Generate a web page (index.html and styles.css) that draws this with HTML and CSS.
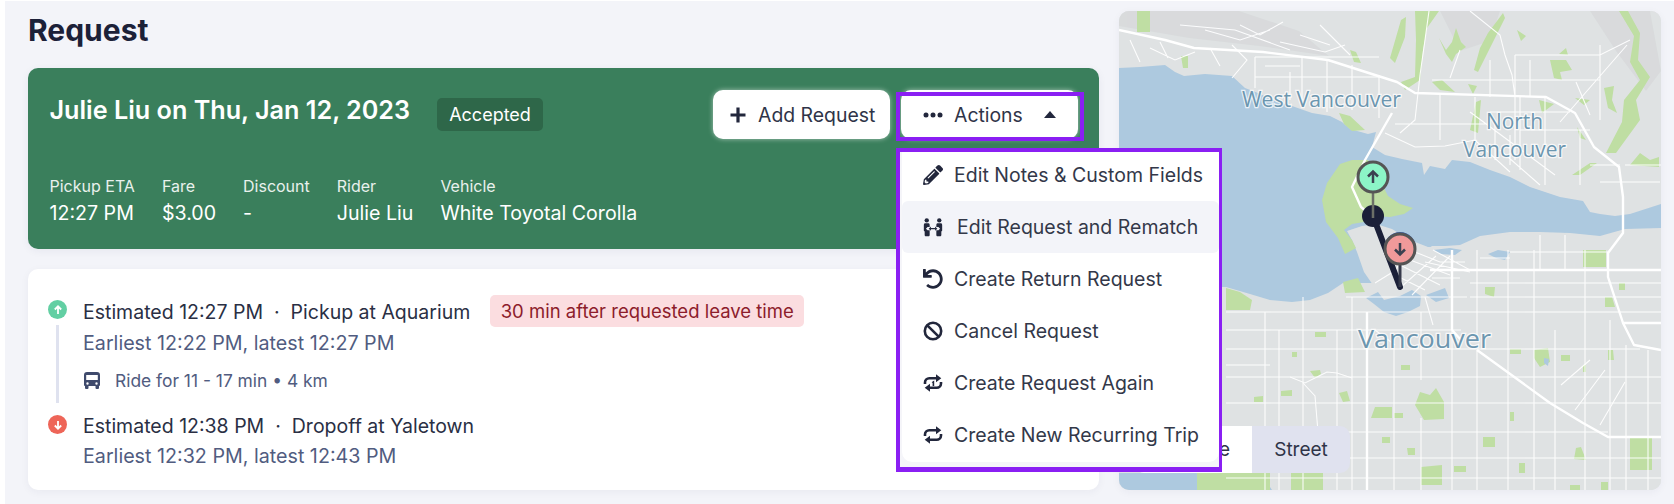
FILE: index.html
```html
<!DOCTYPE html>
<html lang="en">
<head>
<meta charset="utf-8">
<title>Request</title>
<link rel="stylesheet" href="styles.css">
</head>
<body>
<div class="app">
  <main class="main">
    <h1 class="page-title">Request</h1>
    <section class="summary">
      <div class="summary-top">
        <h2 class="summary-title">Julie Liu on Thu, Jan 12, 2023</h2>
        <span class="status">Accepted</span>
        <div class="summary-actions">
          <button class="btn btn-add" type="button">
            <svg class="i-plus" viewBox="0 0 18 18"><path d="M9 1.500v15M1.500 9h15"/></svg>
            <span>Add Request</span>
          </button>
          <div class="actions">
            <button class="btn btn-actions" type="button">
              <svg class="i-dots" viewBox="0 0 20 6"><circle cx="3" cy="3" r="2.500"/><circle cx="10" cy="3" r="2.500"/><circle cx="17" cy="3" r="2.500"/></svg>
              <span>Actions</span>
              <svg class="i-caret" viewBox="0 0 12 7"><path d="M6 0l6 7H0z"/></svg>
            </button>
            <div class="menu">
              <ul class="menu-list">
                <li class="menu-item menu-first">
                  <svg class="mi" viewBox="0 0 512 512"><path class="fill" d="M497.9 142.1l-46.1 46.1c-4.7 4.7-12.3 4.7-17 0l-111-111c-4.7-4.7-4.7-12.3 0-17l46.1-46.1c18.7-18.7 49.1-18.7 67.9 0l60.1 60.1c18.8 18.7 18.8 49.1 0 67.9zM284.2 99.8L21.6 362.4.4 483.9c-2.9 16.4 11.4 30.6 27.8 27.8l121.5-21.3 262.6-262.6c4.7-4.7 4.7-12.3 0-17l-111-111c-4.8-4.7-12.4-4.7-17.1 0zM124.1 339.9c-5.5-5.5-5.5-14.3 0-19.8l154-154c5.5-5.5 14.3-5.5 19.8 0s5.5 14.3 0 19.8l-154 154c-5.5 5.5-14.3 5.5-19.8 0zM88 424h48v36.3l-64.5 11.3-31.1-31.1L51.7 376H88v48z"/></svg>
                  <span>Edit Notes &amp; Custom Fields</span>
                </li>
                <li class="menu-item menu-hover">
                  <svg class="mi" viewBox="0 0 24 22"><g class="fill"><circle cx="4.500" cy="3" r="2.600"/><circle cx="19.500" cy="3" r="2.600"/><path d="M1 8.500C1 7 2 6.500 3 6.500h3c1 0 2 .5 2 2V11H5.500L3.500 13l2 2H8v5.500c0 .8-.6 1.500-1.500 1.500h-3C2.600 22 2 21.300 2 20.500V16.500L1 15.500zM23 8.500C23 7 22 6.500 21 6.500h-3c-1 0-2 .5-2 2V11h2.500l2 2-2 2H16v5.500c0 .8.600 1.500 1.500 1.500h3c.9 0 1.500-.7 1.500-1.500v-4l1-1z"/><path d="M6.800 13l2.700-2.500v1.700h5v-1.700l2.700 2.500-2.700 2.500v-1.700h-5v1.700z"/></g></svg>
                  <span>Edit Request and Rematch</span>
                </li>
                <li class="menu-item">
                  <svg class="mi" viewBox="0 0 512 512"><path class="fill" d="M212.333 224.333H12c-6.627 0-12-5.373-12-12V12C0 5.373 5.373 0 12 0h48c6.627 0 12 5.373 12 12v78.112C117.773 39.279 184.26 7.47 258.175 8.007c136.906.994 246.448 111.623 246.157 248.532C504.041 393.258 393.12 504 256.333 504c-64.089 0-122.496-24.313-166.51-64.215-5.099-4.622-5.334-12.554-.467-17.42l33.967-33.967c4.474-4.474 11.662-4.717 16.401-.525C170.76 415.336 211.58 432 256.333 432c97.268 0 176-78.716 176-176 0-97.267-78.716-176-176-176-58.496 0-110.28 28.476-142.274 72.333h98.274c6.627 0 12 5.373 12 12v48c0 6.627-5.373 12-12 12z"/></svg>
                  <span>Create Return Request</span>
                </li>
                <li class="menu-item">
                  <svg class="mi" viewBox="0 0 20 20"><g class="line"><circle cx="10" cy="10" r="8.200"/><path d="M4.300 4.300l11.400 11.400"/></g></svg>
                  <span>Cancel Request</span>
                </li>
                <li class="menu-item">
                  <svg class="mi" viewBox="0 0 20 20"><use href="#repeat"/><path class="fill" d="M9.500 8.500l1.700-1v5.500H9.600V9.700l-.9.400z"/></svg>
                  <span>Create Request Again</span>
                </li>
                <li class="menu-item">
                  <svg class="mi" viewBox="0 0 20 20"><use href="#repeat"/></svg>
                  <span>Create New Recurring Trip</span>
                </li>
              </ul>
            </div>
          </div>
        </div>
      </div>
      <dl class="meta">
        <div class="meta-item"><dt>Pickup ETA</dt><dd>12:27 PM</dd></div>
        <div class="meta-item"><dt>Fare</dt><dd>$3.00</dd></div>
        <div class="meta-item"><dt>Discount</dt><dd>-</dd></div>
        <div class="meta-item"><dt>Rider</dt><dd>Julie Liu</dd></div>
        <div class="meta-item"><dt>Vehicle</dt><dd>White Toyotal Corolla</dd></div>
      </dl>
    </section>
    <section class="route">
      <div class="stop stop-pickup">
        <div class="stop-rail">
          <span class="dot dot-up"><svg viewBox="0 0 12 12"><path d="M6 10V2.500M2.800 5.500L6 2.300l3.200 3.200"/></svg></span>
          <span class="rail"></span>
        </div>
        <div class="stop-body">
          <div class="stop-line">
            <span>Estimated 12:27 PM&nbsp; ·&nbsp; Pickup at Aquarium</span>
            <span class="late">30 min after requested leave time</span>
          </div>
          <div class="stop-sub">Earliest 12:22 PM, latest 12:27 PM</div>
          <div class="ride">
            <svg class="i-bus" viewBox="0 0 18 18"><path d="M4 1h10a3 3 0 0 1 3 3v10a1 1 0 0 1-1 1v2a1 1 0 0 1-1 1h-1.500a1 1 0 0 1-1-1v-2h-7v2a1 1 0 0 1-1 1H3a1 1 0 0 1-1-1v-2a1 1 0 0 1-1-1V4a3 3 0 0 1 3-3zM3.200 4v5h11.600V4zm1.300 7.300a1.200 1.200 0 1 0 0 2.400 1.200 1.200 0 0 0 0-2.400zm9 0a1.200 1.200 0 1 0 0 2.400 1.200 1.200 0 0 0 0-2.400z" fill-rule="evenodd"/></svg>
            <span>Ride for 11 - 17 min • 4 km</span>
          </div>
        </div>
      </div>
      <div class="stop">
        <div class="stop-rail">
          <span class="dot dot-down"><svg viewBox="0 0 12 12"><path d="M6 2v7.500M2.800 6.500L6 9.700l3.200-3.200"/></svg></span>
        </div>
        <div class="stop-body">
          <div class="stop-line"><span>Estimated 12:38 PM&nbsp; ·&nbsp; Dropoff at Yaletown</span></div>
          <div class="stop-sub">Earliest 12:32 PM, latest 12:43 PM</div>
        </div>
      </div>
    </section>
  </main>
  <aside class="map">
    <svg class="map-svg" viewBox="1119 11 542 479" preserveAspectRatio="none">
      <rect class="land" x="1119" y="11" width="542" height="479"/>
      <path class="hill" d="M1119 11h120l60 20 30 25-70-10-70-8-70-12zM1590 11h60l11 60-15 20-30-40zM1440 11h60l-10 30-30 10z"/>
      <path class="water" d="M1119 68L1140 67 1165 65 1175 72 1184 76 1205 74 1232 76 1245 88 1258 93 1275 101 1292 106 1312 113 1330 116 1342 122 1350 129 1368 134 1376 132 1372 147 1385 155 1402 159 1422 163 1424 175 1430 166 1445 169 1452 160 1470 162 1490 170 1510 177 1530 187 1560 197 1583 201 1590 212 1600 214 1615 216 1630 214 1661 204 1661 228 1625 229 1600 236 1570 233 1540 232 1510 232 1480 236 1460 245 1445 246 1432 246 1420 254 1400 260 1375 283 1343 283 1328 293 1310 300 1292 302 1270 300 1250 294 1226 287 1119 287Z"/>
      <path class="land" d="M1347 231L1362 226 1376 224 1392 229 1410 240 1428 247 1460 248 1480 238 1510 234 1510 300 1440 300 1400 296 1375 288 1364 272 1357 252 1352 240Z"/>
      <path class="water" d="M1366 298L1378 292 1384 300 1400 296 1412 290 1421 296 1420 306 1408 312 1396 316 1384 312 1374 304ZM1426 295L1445 288 1449 298 1436 302ZM1488 254L1498 250 1510 252 1505 260 1496 258ZM1433 250L1450 248 1462 250 1455 255 1440 254ZM1119 473L1197 473 1200 490 1119 490ZM1215 478L1270 487 1272 490 1215 490Z"/>
      <g class="park">
        <path d="M1322 200L1327 183 1340 164 1352 160 1368 160 1376 172 1388 196 1400 204 1413 208 1404 214 1390 217 1375 216 1364 222 1352 224 1344 230 1352 240 1356 248 1345 254 1338 238 1326 222Z"/>
        <path d="M1339 113L1350 116 1365 130 1352 131 1344 124ZM1343 282L1358 278 1365 292 1345 293ZM1226 288L1240 292 1252 300 1250 310 1226 310Z"/>
        <path d="M1137 11h13v21h-13zM1181 56h7v12h-5zM1401 20L1406 17 1405 37 1395 63 1390 58ZM1415 11H1439L1427 28 1423 50 1420 80 1405 90 1401 82 1415 77 1416 40ZM1350 50L1356 52 1361 63 1354 62Z"/>
        <path d="M1439 38L1446 50 1452 42 1456 28 1461 42 1466 47 1456 54 1452 62 1446 54ZM1474 70L1480 48 1488 33 1503 13 1505 18 1494 40 1486 56 1478 72ZM1517 30L1526 36 1521 41ZM1550 60H1566L1572 70 1560 72 1562 80 1554 78ZM1559 54L1566 48 1568 55Z"/>
        <path d="M1619 11H1628L1640 33 1638 60 1650 77 1636 100 1640 120 1616 153 1606 153 1622 122 1624 100 1640 80 1630 62 1634 36ZM1604 88L1614 86 1612 100 1617 113 1608 108ZM1432 82L1442 80 1455 92 1440 90ZM1468 84L1477 86 1473 94ZM1470 130L1476 102 1481 100 1478 133ZM1539 100L1554 104 1542 113ZM1575 98L1590 100 1584 105ZM1577 127L1586 140 1580 138ZM1572 175L1590 163 1597 163 1580 175ZM1630 165L1640 153 1650 160 1659 157 1659 167Z"/>
        <path d="M1583 250h23v17h-23zM1485 287h10l-1 10-9-3zM1605 297h7l3 10h-10zM1619 283h6v7h-6zM1534 350L1548 348 1550 362 1540 367 1534 358zM1561 355h9v6h-9zM1510 349h11v5h-11zM1608 350h5l1 10h-6zM1583 365h3v7h-3zM1401 365h9v5h-9zM1292 352h5v5h-5zM1315 332h11v5h-11zM1310 371l10-1 1 4-6 4zM1339 393l8-2 3 10-7 1zM1281 391l11-1v6h-11zM1254 397l9-1v6h-9z"/>
        <path d="M1420 392L1430 395 1436 388 1444 402 1444 419 1424 420 1415 405ZM1371 418l4-11h17v11zM1394 413h9v5h-9zM1510 412h4v9h-4zM1382 437h8v6h-8zM1483 437h12v10h-12zM1407 448h8v7h-7zM1576 448l5-1 5 13-12-1zM1630 437h22v33h-22zM1519 463h6v10h-6zM1454 466h12v6h-12zM1421 467l21-2v20h-21zM1291 473h32v17h-32zM1197 473h73v17h-73zM1570 485h10v5h-10zM1601 482h7v8h-7z"/>
      </g>
      <g class="water">
        <path d="M1544 358l5 1-1 7-4-3z"/>
      </g>
      <g class="road">
        <path d="M1255 57H1379M1255 77H1379M1255 57V88M1302 57V100M1327 60V112M1352 65V110M1379 75V118M1290 72V100M1232 45L1247 60 1232 78M1240 25L1260 35 1283 22M1180 25L1235 30 1290 50M1150 48L1175 60 1195 52M1130 40L1140 62M1320 25L1350 55M1280 42L1325 52 1345 45M1300 35L1330 45M1205 30L1240 40 1270 30M1160 42L1168 58M1210 48L1220 66M1265 66H1300"/>
        <path d="M1429 11L1425 40 1420 75 1415 120 1400 133M1470 11L1500 35 1505 55 1512 75 1515 97M1515 55H1600L1630 40M1515 55V160M1432 80H1600M1395 124H1490M1385 133L1415 147 1445 146 1475 140 1510 172M1440 95V140M1475 97V145M1520 97V170M1545 97V185M1580 130V185M1600 45V120M1560 122L1627 45M1490 112H1570M1470 112L1555 175M1520 130H1590M1600 182H1660M1625 165H1661M1500 150L1540 185M1510 135V165M1495 122V160M1590 165H1620"/>
        <path d="M1530 60V97M1490 60V97M1576 82L1590 115M1460 50L1450 78"/>
        <path d="M1433 250L1470 270H1661M1425 262L1470 272M1410 260L1450 275M1400 265L1440 285M1395 275L1425 290M1436 256L1400 288M1450 256L1412 295M1440 262H1465M1438 270H1465M1432 278H1460M1410 250L1440 262M1375 283L1396 270 1405 250M1510 252H1608M1540 235V270M1565 235V270M1480 258H1510"/>
        <path d="M1346 297H1467M1226 312H1450 1470 1661M1226 330H1268 1340 1352 1461M1226 349H1367 1394 1478 1640M1226 377H1260 1290 1300 1337 1352 1367 1394 1421 1520 1661M1226 403H1661M1226 432H1367 1421 1508 1608M1226 458H1661M1226 478H1661M1470 283H1661M1470 297H1661M1226 365H1270"/>
        <path d="M1265 312V490M1279 330V490M1303 297V490M1337 330V490M1352 297V490M1394 349V490M1421 312V380 M1421 418V490M1452 290V490M1477 250V340M1477 350V490M1508 250V490M1534 250V490M1555 330V490M1585 250V490M1610 320V490M1626 345V490M1648 350V490"/>
        <path d="M1425 297L1433 325 M1375 330L1395 345M1290 377L1305 383 1327 372 1337 373 1352 378M1303 383L1315 396 1318 432M1561 385L1590 360M1575 410L1605 370M1600 425L1625 382"/>
      </g>
      <g class="road-main">
        <path d="M1119 30L1165 40 1194 48 1263 52 1328 60 1375 75 1397 82 1415 93 1546 97 1575 113 1594 147 1619 167 1623 197 1623 233 1608 253 1608 277 1623 323 1634 345 1661 350"/>
        <path d="M1392 113L1365 160 1352 187 1361 207 1372 216"/>
        <path d="M1367 312V490M1452 250V330 M1452 330L1461 340M1477 350L1550 403 1583 423 1608 437 1661 437M1623 323H1661M1430 270H1661"/>
      </g>
      <g class="place">
        <text class="place-md" x="1242" y="107" textLength="159" lengthAdjust="spacingAndGlyphs">West Vancouver</text>
        <text class="place-md" x="1486" y="129" textLength="57" lengthAdjust="spacingAndGlyphs">North</text>
        <text class="place-md" x="1463" y="157" textLength="103" lengthAdjust="spacingAndGlyphs">Vancouver</text>
        <text class="place-lg" x="1358" y="348" textLength="133" lengthAdjust="spacingAndGlyphs">Vancouver</text>
      </g>
      <g class="pins">
        <path class="trip" d="M1373 216L1400 287"/>
        <circle class="trip-node" cx="1373" cy="216" r="11"/>
        <path class="stem" d="M1373 192V218"/>
        <circle class="pin pin-up" cx="1373" cy="177" r="15"/>
        <path class="pin-arrow" d="M1373 183V172M1368 176.500L1373 171.500 1378 176.500"/>
        <path class="stem-dark" d="M1400 264V287"/>
        <circle class="pin-halo" cx="1400" cy="248" r="16"/>
        <circle class="pin pin-down" cx="1400" cy="249" r="15"/>
        <path class="pin-arrow" d="M1400 243V254M1395 249.500L1400 254.500 1405 249.500"/>
      </g>
    </svg>
    <div class="map-switch">
      <span class="seg">Satellite</span>
      <span class="seg seg-on">Street</span>
    </div>
  </aside>
</div>
<svg class="defs" width="0" height="0" aria-hidden="true">
  <symbol id="repeat" viewBox="0 0 20 20">
    <path d="M2 11V9.500C2 7 4 5.300 6.300 5.300H16M18 9v1.500c0 2.500-2 4.200-4.300 4.200H4" fill="none" stroke="#22273c" stroke-width="2.600"/>
    <path d="M13 1.300l5.300 4-5.300 4zM7 10.700l-5.300 4 5.300 4z" fill="#22273c"/>
  </symbol>
</svg>
</body>
</html>
```
FILE: styles.css
```css
* { box-sizing: border-box; }
html, body { margin: 0; padding: 0; }
body {
  width: 1674px;
  height: 504px;
  overflow: hidden;
  background: #fff;
  font-family: Inter, "Liberation Sans", sans-serif;
  color: #23283d;
}
.app {
  display: grid;
  grid-template-columns: 1071px 542px;
  column-gap: 20px;
  margin: 1px 0 0 5px;
  padding: 10px 13px 0 23px;
  height: 503px;
  background: #f3f4f9;
}
.defs { position: absolute; }

.main { display: flex; flex-direction: column; }
.page-title {
  margin: 0 0 19px;
  font-size: 30px;
  line-height: 38px;
  font-weight: 700;
  color: #1c2138;
}

.summary {
  height: 181px;
  padding: 22px 15px 0 21.500px;
  background: #3a7f5c;
  border-radius: 10px;
  color: #fff;
  box-shadow: 0 2px 8px rgba(30, 40, 80, .06);
}
.summary-top { display: flex; align-items: flex-start; height: 49px; }
.summary-title {
  margin: 0;
  font-size: 25.200px;
  line-height: 40px;
  font-weight: 600;
  white-space: nowrap;
}
.status {
  margin: 8px 0 0 27px;
  width: 106px;
  height: 33px;
  line-height: 33px;
  text-align: center;
  font-size: 18px;
  font-weight: 400;
  background: #2e6749;
  border-radius: 5px;
}
.summary-actions { margin-left: auto; display: flex; gap: 11px; }
.btn {
  display: flex;
  align-items: center;
  height: 49px;
  border: 0;
  background: #fff;
  border-radius: 10px;
  font: inherit;
  font-size: 19.400px;
  color: #2f3448;
  padding: 0;
  box-shadow: 0 0 5px rgba(255, 255, 255, .55);
}
.btn-add { width: 177px; padding-left: 16px; }
.i-plus { width: 18px; height: 18px; margin-right: 11px; flex: none; }
.i-plus path { stroke: #22273c; stroke-width: 3.200; fill: none; }
.actions { position: relative; width: 177px; margin-right: 6px; }
.actions::after {
  content: "";
  position: absolute;
  top: 2px;
  left: -5px;
  right: -6px;
  bottom: -2px;
  border: 4px solid #8a1ff3;
  pointer-events: none;
}
.btn-actions { width: 100%; padding-left: 22px; }
.i-dots { width: 20px; height: 6px; margin-right: 11px; fill: #22273c; flex: none; }
.i-caret { width: 12px; height: 7px; margin-left: 21px; fill: #22273c; flex: none; }

.menu {
  position: absolute;
  z-index: 5;
  top: 58px;
  left: -5px;
  width: 326px;
  height: 324px;
  background: #f5f5f9;
  border-style: solid;
  border-color: #8a1ff3;
  border-width: 4px 3px 5px 4px;
  color: #333849;
}
.menu-list {
  list-style: none;
  margin: 0 0 0 2px;
  padding: 0 0 1px;
  background: #fff;
  border-radius: 0 0 10px 10px;
}
.menu-item {
  display: flex;
  align-items: center;
  height: 52px;
  padding-left: 21px;
  font-size: 19.500px;
  white-space: nowrap;
}
.menu-first { height: 49px; padding-bottom: 3px; }
.menu-hover { background: #f3f4f9; border-radius: 6px; }
.menu-hover .mi { margin-right: 14px; }
.mi { width: 20px; height: 20px; margin-right: 11px; flex: none; }
.fill { fill: #22273c; }
.line { fill: none; stroke: #22273c; stroke-width: 2.600; }

.meta { display: flex; gap: 27px; margin: 35px 0 0; }
.meta-item { display: flex; flex-direction: column; }
.meta dt { font-size: 16px; line-height: 24px; color: #e9f1ed; white-space: nowrap; }
.meta dd { margin: 0; font-size: 19.600px; line-height: 30px; color: #fff; white-space: nowrap; }

.route {
  margin-top: 20px;
  height: 221px;
  padding: 27px 20px 0;
  background: #fff;
  border-radius: 10px;
  box-shadow: 0 2px 8px rgba(30, 40, 80, .05);
}
.stop { display: grid; grid-template-columns: 19px 1fr; column-gap: 16px; }
.stop-pickup { height: 115px; }
.stop-rail { display: flex; flex-direction: column; align-items: center; padding-top: 4px; }
.dot {
  display: flex;
  align-items: center;
  justify-content: center;
  width: 19px;
  height: 19px;
  border-radius: 50%;
  flex: none;
}
.dot svg { width: 12px; height: 12px; }
.dot path { fill: none; stroke: #fff; stroke-width: 1.800; }
.dot-up { background: #62cfa3; }
.dot-down { background: #ee6558; }
.rail { width: 2.500px; flex: 1; margin: 6px 0 8px; background: #dfe2ef; }
.stop-line { display: flex; align-items: center; font-size: 19.500px; line-height: 30px; color: #2a2f44; white-space: nowrap; }
.stop-sub { font-size: 19.700px; line-height: 30px; color: #515c80; }
.late {
  margin-left: 20px;
  height: 32px;
  line-height: 32px;
  width: 314px;
  text-align: center;
  font-size: 18.500px;
  background: #fbdde0;
  border-radius: 5px;
  color: #8d1c2b;
  position: relative;
  top: -1px;
}
.ride { display: flex; align-items: center; gap: 14px; margin-top: 10px; height: 24px; font-size: 17.400px; color: #515c80; }
.i-bus { width: 18px; height: 18px; fill: #3f4a6c; flex: none; }

.map {
  position: relative;
  height: 479px;
  border-radius: 10px;
  overflow: hidden;
  background: #dfe2e3;
  box-shadow: 0 2px 8px rgba(30, 40, 80, .05);
}
.map-svg { display: block; width: 542px; height: 479px; }
.land { fill: #dfe2e3; }
.hill { fill: #d9dbdc; }
.water { fill: #adc9df; }
.park { fill: #bfdea3; }
.road { fill: none; stroke: #fff; stroke-width: 1.100; opacity: .92; }
.road-main { fill: none; stroke: #fff; stroke-width: 2.400; stroke-linejoin: round; }
.place { fill: #6c96af; font-family: "Open Sans", "Noto Sans", sans-serif; font-weight: 500; stroke: rgba(255,255,255,.75); stroke-width: 2.500px; paint-order: stroke; }
.place-md { font-size: 22px; }
.place-lg { font-size: 26px; }
.trip { stroke: #1b2038; stroke-width: 6; stroke-linecap: round; }
.trip-node { fill: #1b2038; }
.stem { stroke: #6b6f67; stroke-width: 2.500; }
.stem-dark { stroke: #363a4a; stroke-width: 3; }
.pin { stroke: #555; stroke-width: 3; }
.pin-up { fill: #8cf5c7; }
.pin-down { fill: #f09a9a; }
.pin-halo { fill: #3a5fa8; }
.pin-arrow { fill: none; stroke: #3b4150; stroke-width: 2.500; }

.map-switch {
  position: absolute;
  left: 17px;
  top: 415px;
  display: flex;
  height: 47px;
  font-size: 19px;
  color: #2f3448;
}
.seg {
  display: flex;
  align-items: center;
  justify-content: flex-end;
  width: 116px;
  padding-right: 22px;
  background: #fff;
  border-radius: 8px 0 0 8px;
}
.seg-on {
  width: 98px;
  justify-content: center;
  padding: 0;
  background: #e0e2ef;
  border-radius: 0 10px 10px 0;
}
```
